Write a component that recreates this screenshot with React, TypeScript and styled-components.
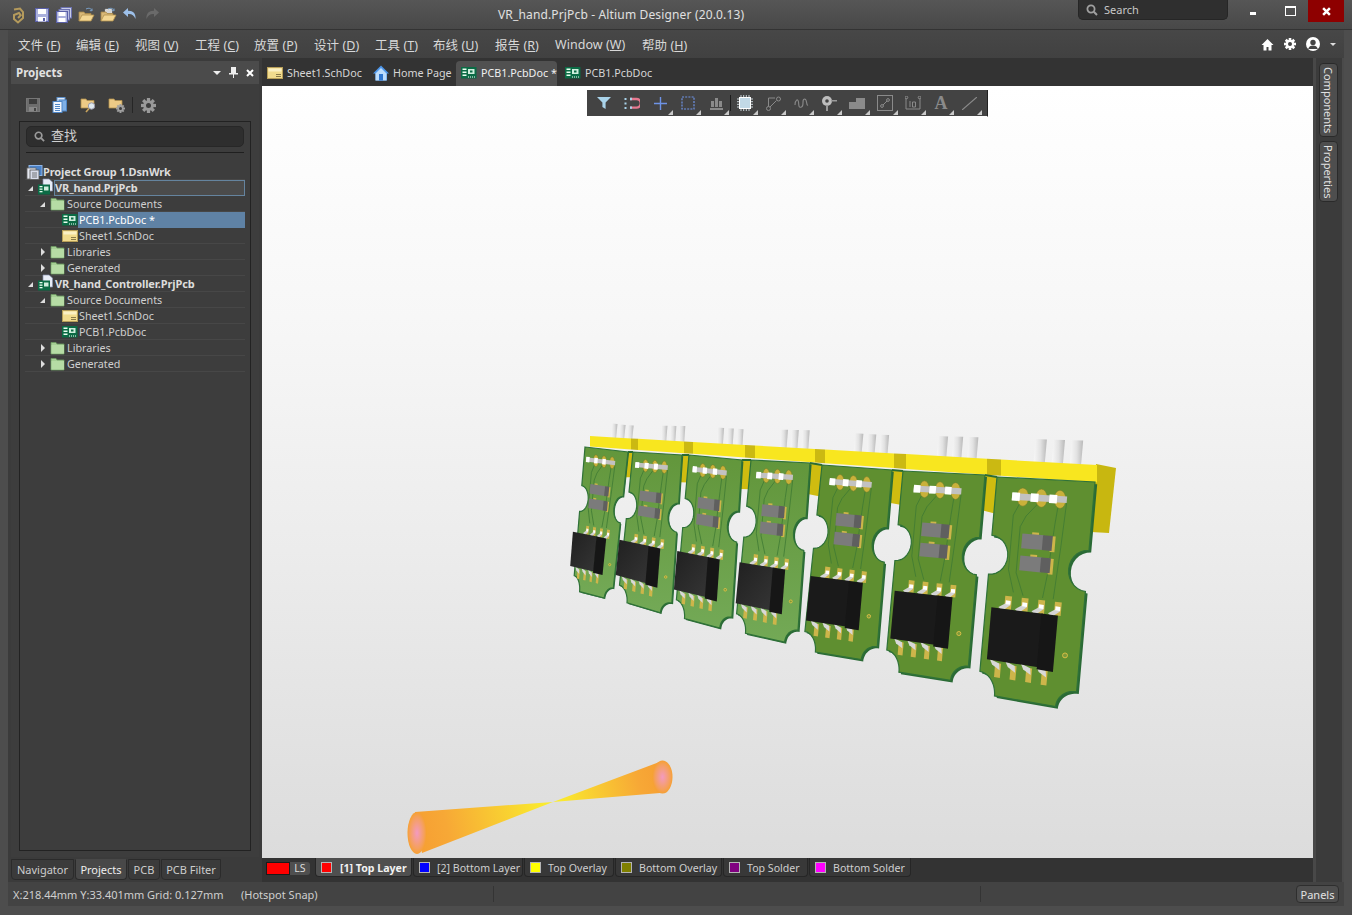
import React from 'react';
import styled, { createGlobalStyle } from 'styled-components';

const UI = `"Noto Sans", "Noto Sans CJK SC", sans-serif`;

const Global = createGlobalStyle`
  html, body { margin: 0; padding: 0; background: #4c4c4c; }
  * { box-sizing: border-box; }
`;

const Root = styled.div`
  width: 1352px; height: 915px; overflow: hidden; display: flex; flex-direction: column;
  background: #4d4d4d; font: 11px ${UI}; color: #d8d8d8; letter-spacing: 0;
`;
const TitleBar = styled.div`
  height: 30px; flex: none; display: flex; align-items: flex-start; padding-right: 8px;
  background: linear-gradient(#565656, #484848);
  border-bottom: 1px solid #333;
`;
const QuickBar = styled.div`
  width: 488px; flex: none; height: 29px; padding-left: 12px; display: flex; align-items: center; gap: 6px;
`;
const QuickIcon = styled.span`
  width: 16px; height: 16px; display: block; flex: none;
  svg { display: block; }
`;
const Title = styled.div`
  margin-left: 10px; line-height: 29px; font-size: 12px; color: #e0e0e0; letter-spacing: .15px;
`;
const SearchBox = styled.div`
  margin-left: auto; width: 150px; height: 20px; display: flex; align-items: center; gap: 6px; padding-left: 7px;
  background: #2f2f2f; border: 1px solid #262626; border-top: 0; border-radius: 0 0 5px 5px; color: #c8c8c8;
`;
const WinBtn = styled.div<{ $w: number; $close?: boolean; $low?: boolean }>`
  width: ${p => p.$w}px; height: 22px; display: flex; align-items: center; justify-content: center; flex: none;
  padding: ${p => (p.$low ? '5px 0 0 6px' : '0')};
  background: ${p => (p.$close ? '#8e0000' : 'transparent')};
`;
const MenuBar = styled.div`
  height: 28px; flex: none; margin: 0 8px; padding: 0 0 0 10px; display: flex; align-items: center;
  background: linear-gradient(#474747, #414141);
`;
const MenuItem = styled.div<{ $w: number }>`
  width: ${p => p.$w}px; flex: none; font-size: 12.5px; color: #d8d8d8; letter-spacing: .05px; white-space: nowrap;
`;
const MenuIcons = styled.div`
  margin-left: auto; display: flex; align-items: center; gap: 10px; padding-right: 8px;
`;
const Work = styled.div`
  flex: none; height: 824px; margin: 0 8px; display: flex; background: #3b3b3b;
`;
const LeftPanel = styled.div`
  width: 254px; flex: none; padding: 3px 3px 2px 3px; display: flex; flex-direction: column;
`;
const PanelHead = styled.div`
  height: 23px; flex: none; background: #4b4b4b; display: flex; align-items: center; padding: 0 5px;
  font-weight: 700; font-size: 11.5px; color: #e2e2e2; letter-spacing: 0;
`;
const PanelHeadIcons = styled.div`
  margin-left: auto; display: flex; align-items: center; gap: 8px;
`;
const PanelBody = styled.div`
  flex: 1; min-height: 0; background: #3d3d3d; padding: 0 8px 6px; display: flex; flex-direction: column;
`;
const PanelTools = styled.div`
  height: 37px; flex: none; display: flex; align-items: center; padding: 5px 0 0 6px;
`;
const ToolSlot = styled.span<{ $w: number }>`
  width: ${p => p.$w}px; flex: none; display: flex; justify-content: flex-start;
`;
const ToolSep = styled.span`
  width: 1px; height: 16px; background: #262626; margin: 0 8px 0 0; flex: none;
`;
const TreeBox = styled.div`
  flex: 1; min-height: 0; border: 1px solid #222; padding: 4px 5px 0 5px;
`;
const TreeSearch = styled.div`
  height: 21px; margin: 0 1px; background: #2e2e2e; border: 1px solid #272727; border-radius: 5px; display: flex; align-items: center;
  gap: 6px; padding: 0 0 4px 7px; font-size: 13px; color: #d0d0d0;
  svg { margin-top: 4px; }
`;
const TreeRule = styled.div`
  height: 1px; background: #1f1f1f; margin: 5px 1px 11px;
`;
const Row = styled.div<{ $indent: number }>`
  height: 16px; display: flex; align-items: center; border-bottom: 1px solid #474747; padding-left: ${p => p.$indent}px;
  white-space: nowrap; color: #cfcfcf; position: relative;
`;
const Arrow = styled.span<{ $open?: boolean }>`
  width: 9px; height: 8px; flex: none; display: block; margin-right: 2px; position: relative;
  &::before {
    content: ''; position: absolute; display: block;
    ${p =>
      p.$open
        ? 'left:1px; top:2px; border-style: solid; border-width: 0 0 5px 5px; border-color: transparent transparent #ddd transparent;'
        : 'left:2px; top:0; border-style: solid; border-width: 4px 0 4px 4px; border-color: transparent transparent transparent #ddd;'}
  }
`;
const RowIcon = styled.span`
  width: 16px; height: 14px; flex: none; display: block; svg { display: block; }
`;
const RowLabel = styled.span<{ $bold?: boolean; $sel?: 'focus' | 'active' }>`
  flex: ${p => (p.$sel ? 1 : '0 0 auto')}; height: 16px; padding-left: ${p => (p.$sel === 'focus' ? 0 : 1)}px;
  font-size: ${p => (p.$bold ? '11px' : '10.75px')};
  font-weight: ${p => (p.$bold ? 700 : 400)}; letter-spacing: ${p => (p.$bold ? '-.12px' : '0')};
  color: ${p => (p.$bold ? '#dcdcdc' : p.$sel ? '#fff' : '#cfcfcf')};
  background: ${p => (p.$sel === 'active' ? '#5f82a5' : p.$sel === 'focus' ? '#4b4b4b' : 'transparent')};
  border: ${p => (p.$sel === 'focus' ? '1px solid #65849f' : '0')};
  line-height: ${p => (p.$sel === 'focus' ? '13px' : p.$bold ? '15px' : '17px')};
`;
const PanelTabs = styled.div`
  height: 21px; margin-top: 2px; flex: none; display: flex; gap: 1px; align-items: stretch;
`;
const PanelTab = styled.div<{ $active?: boolean; $w: number }>`
  width: ${p => p.$w}px; text-align: center; line-height: 19px; color: ${p => (p.$active ? '#eee' : '#cdcdcd')};
  background: ${p => (p.$active ? '#484848' : '#3b3b3b')};
  border: 1px solid #2b2b2b; border-top-color: ${p => (p.$active ? '#484848' : '#2b2b2b')}; border-radius: 0 0 4px 4px;
  white-space: nowrap;
`;
const Center = styled.div`
  width: 1051px; flex: none; display: flex; flex-direction: column;
`;
const DocTabs = styled.div`
  height: 28px; flex: none; padding-top: 3px; background: #333; display: flex; align-items: stretch;
`;
const DocTab = styled.div<{ $active?: boolean; $w: number }>`
  width: ${p => p.$w}px; flex: none; display: flex; align-items: center; gap: 4px; padding: 0 0 2px 5px; white-space: nowrap;
  color: ${p => (p.$active ? '#f0f0f0' : '#d6d6d6')}; background: ${p => (p.$active ? '#515151' : 'transparent')};
  margin-right: ${p => (p.$active ? 3 : 0)}px; font-size: 10.75px;
  border-radius: 4px 4px 0 0;
  svg { flex: none; }
`;
const Canvas = styled.div`
  height: 772px; flex: none; position: relative; overflow: hidden;
  background: linear-gradient(#ffffff 0%, #f7f7f7 30%, #ececec 60%, #dcdcdc 100%);
`;
const Scene = styled.svg`
  position: absolute; inset: 0; width: 100%; height: 100%;
`;
const FloatBar = styled.div`
  position: absolute; left: 325px; top: 4px; height: 27px; width: 401px; background: #434343; display: flex; padding-left: 3px;
  border-right: 1px solid #222; border-bottom: 1px solid #fff; align-items: stretch;
`;
const FloatBtn = styled.div<{ $noCorner?: boolean }>`
  width: 28px; flex: none; display: flex; align-items: center; justify-content: center; position: relative;
  &::after {
    content: ''; position: absolute; right: 1px; bottom: 1px; border-style: solid; border-width: 0 0 5px 5px;
    border-color: transparent transparent ${p => (p.$noCorner ? 'transparent' : '#c9c9c9')} transparent;
  }
`;
const FloatSep = styled.div`
  width: 1px; margin: 5px 0; background: #1c1c1c; flex: none;
`;
const LayerBar = styled.div`
  height: 24px; flex: none; background: #333; display: flex; align-items: flex-start; padding-left: 4px;
`;
const LayerSwatch = styled.div`
  width: 24px; height: 13px; margin-top: 4px; background: #ff0000; border: 1px solid #1b1b1b; flex: none;
`;
const LsBtn = styled.div`
  width: 20px; height: 13px; margin: 4px 5px 0 0; background: #4f4f4f; text-align: center; line-height: 12px; font-size: 10.5px;
  border-radius: 0 3px 3px 0; color: #dcdcdc; flex: none;
`;
const LayerTab = styled.div<{ $active?: boolean; $w: number }>`
  width: ${p => p.$w}px; flex: none; height: 19px; margin-right: 1px; display: flex; align-items: center;
  gap: ${p => (p.$active ? 8 : 7)}px; padding: 0 0 0 5px; font-size: 10.6px; line-height: 20px;
  background: ${p => (p.$active ? '#4f4f4f' : '#383838')}; border: 1px solid #262626; border-top: 0; border-radius: 0 0 4px 4px;
  color: ${p => (p.$active ? '#f2f2f2' : '#cfcfcf')}; font-weight: ${p => (p.$active ? 700 : 400)}; white-space: nowrap;
`;
const LayerName = styled.span`
  position: relative; top: 1px;
`;
const LayerChip = styled.span<{ $c: string }>`
  width: 11px; height: 11px; flex: none; background: ${p => p.$c}; border: 1px solid #b4b4b4;
`;
const RightStrip = styled.div`
  width: 31px; flex: none; padding: 5px 4px 0 3px; display: flex; flex-direction: column; gap: 4px; background: #3b3b3b;
  border-left: 3px solid #484848; border-right: 2px solid #4a4a4a;
`;
const SideTab = styled.div<{ $h: number }>`
  height: ${p => p.$h}px; width: 19px; writing-mode: vertical-rl; text-align: center; line-height: 17px; background: #4e4e4e;
  border: 1px solid #2a2a2a; border-radius: 4px; color: #e2e2e2; white-space: nowrap;
`;
const StatusBar = styled.div`
  height: 24px; flex: none; margin: 0 8px; background: #434343; display: flex; align-items: center; position: relative;
  padding-left: 5px; color: #cfcfcf; white-space: nowrap;
`;
const StatusCell = styled.div<{ $w: number }>`
  width: ${p => p.$w}px; flex: none;
`;
const StatusRule = styled.div`
  width: 1px; height: 16px; background: #343434; flex: none;
`;
const PanelsBtn = styled.div`
  margin: 0 5px 0 auto; width: 43px; height: 18px; line-height: 17px; text-align: center; background: #4e4e4e;
  border: 1px solid #2e2e2e; border-radius: 4px; color: #e2e2e2;
`;

/* ---------- small drawn icons ---------- */
const Floppy = ({ c = '#aab0dc', dim }: { c?: string; dim?: boolean }) => (
  <svg width="16" height="16" viewBox="0 0 16 16">
    <rect x="1.5" y="1.5" width="13" height="13" fill={dim ? '#6d6d6d' : c} stroke={dim ? '#777' : '#5a60a8'} />
    <rect x="4" y="2" width="8" height="5" fill={dim ? '#3d3d3d' : '#fff'} />
    <rect x="4" y="10" width="8" height="4.5" fill={dim ? '#888' : '#fff'} />
    <rect x="9" y="11" width="2" height="3" fill={dim ? '#444' : '#5a60a8'} />
  </svg>
);
const Floppies = () => (
  <svg width="16" height="16" viewBox="0 0 16 16">
    <rect x="5" y="0.5" width="10.5" height="10.5" fill="#c8cce8" stroke="#6c72b0" />
    <rect x="3" y="2.5" width="10.5" height="10.5" fill="#b8bce0" stroke="#6c72b0" />
    <rect x="0.5" y="4.5" width="11" height="11" fill="#aab0dc" stroke="#5a60a8" />
    <rect x="2.5" y="5" width="7" height="4" fill="#fff" />
    <rect x="2.5" y="11" width="7" height="4" fill="#fff" />
  </svg>
);
const FolderOpen = ({ paper }: { paper?: boolean }) => (
  <svg width="17" height="16" viewBox="0 0 17 16">
    {paper && <path d="M5 2h7v6H5z" fill="#fff" stroke="#888" strokeWidth=".6" />}
    {paper && <path d="M6 4h5M6 6h5" stroke="#888" strokeWidth=".7" />}
    <path d="M1 14V5h5l1 1.5h6V9" fill="#d9b877" stroke="#a68746" strokeWidth=".8" />
    <path d="M1 14l3-6h12l-3 6z" fill="#f3d692" stroke="#b08f4d" strokeWidth=".8" />
    <path d="M8 2c3-1.5 5-.5 6 1.5M14 1.5v2.2h-2.2" fill="none" stroke="#7aa0c8" strokeWidth="1" />
  </svg>
);
const Undo = ({ on }: { on?: boolean }) => (
  <svg width="16" height="14" viewBox="0 0 16 14">
    <path d="M6 1L1 5.5 6 10V7c3.5-.4 6 1 7.5 5C14 6.5 11 3.6 6 3.8z" fill={on ? '#9dc0ea' : '#6a6a6a'} />
  </svg>
);
const Redo = () => (
  <svg width="16" height="14" viewBox="0 0 16 14">
    <path d="M10 1l5 4.5-5 4.5V7C6.5 6.6 4 8 2.5 12 2 6.5 5 3.6 10 3.8z" fill="#6a6a6a" />
  </svg>
);
const Logo = () => (
  <svg width="12" height="17" viewBox="0 0 12 17">
    <path d="M2 2.5L8 1.5l3 3.5v6l-5 4.5-4-3.5V8l5-2 1.7 2.2L6 11" fill="none" stroke="#b49a5c" strokeWidth="2" />
  </svg>
);
const Loupe = ({ c = '#a0a0a0', s = 12 }: { c?: string; s?: number }) => (
  <svg width={s} height={s} viewBox="0 0 12 12" style={{ flex: 'none' }}>
    <circle cx="5" cy="5" r="3.6" fill="none" stroke={c} strokeWidth="1.8" />
    <path d="M7.8 7.8L11 11" stroke={c} strokeWidth="2" />
  </svg>
);
const Gear = ({ c = '#fff', s = 12, inner = '#444' }: { c?: string; s?: number; inner?: string }) => (
  <svg width={s} height={s} viewBox="0 0 12 12">
    <g fill={c}>
      <circle cx="6" cy="6" r="4.2" />
      {[0, 45, 90, 135].map(a => (
        <rect key={a} x="4.7" y="0" width="2.6" height="12" transform={`rotate(${a} 6 6)`} />
      ))}
    </g>
    <circle cx="6" cy="6" r="2" fill={inner} />
  </svg>
);
const Pcb = () => (
  <svg width="16" height="14" viewBox="0 0 16 14">
    <rect x="0" y="1" width="15.5" height="11.5" fill="#0b6b45" />
    <rect x="1.5" y="2.5" width="4" height="1.5" fill="#e8fff0" />
    <rect x="1.5" y="5.5" width="4" height="1.5" fill="#e8fff0" />
    <rect x="1.5" y="8.5" width="4" height="1.5" fill="#e8fff0" />
    <rect x="7" y="3" width="6.5" height="5" fill="#cfeedd" />
    <rect x="9" y="4.5" width="2.5" height="2" fill="#0b6b45" />
    <path d="M7 11h1M9 11h1M11 11h1M13 11h1" stroke="#fff" strokeWidth="1" />
  </svg>
);
const Sch = () => (
  <svg width="16" height="14" viewBox="0 0 16 14">
    <rect x="0.5" y="1.5" width="15" height="11" fill="#f1db8d" stroke="#b79e58" />
    <rect x="1.5" y="2.5" width="13" height="3" fill="#fbf0c4" />
    <path d="M9 8.5h5M9 10.5h5" stroke="#8a7a48" strokeWidth="1" />
  </svg>
);
const Folder = () => (
  <svg width="15" height="14" viewBox="0 0 15 14">
    <path d="M1 3V1.5h5L7 3h7v10H1z" fill="#a5cf94" stroke="#6d9a62" strokeWidth=".8" />
    <rect x="1.5" y="4" width="12.5" height="8.5" fill="#b6dca5" />
  </svg>
);
const Prj = () => (
  <svg width="16" height="14" viewBox="0 0 16 14" overflow="visible">
    <path d="M5 -2h6l3.5 3v9H5z" fill="#e8edf7" stroke="#8a94b0" strokeWidth=".7" />
    <rect x="0" y="3.5" width="12" height="10" fill="#0b6b45" />
    <rect x="1.5" y="5" width="3" height="1.3" fill="#e8fff0" />
    <rect x="1.5" y="7.5" width="3" height="1.3" fill="#e8fff0" />
    <rect x="1.5" y="10" width="3" height="1.3" fill="#e8fff0" />
    <rect x="6" y="5.5" width="4.5" height="4" fill="#cfeedd" />
  </svg>
);
const Group = () => (
  <svg width="17" height="15" viewBox="0 0 17 15">
    <rect x="3" y="0.5" width="13" height="10" fill="#4a82c9" stroke="#8fb5e6" />
    <rect x="1" y="3" width="9" height="11" fill="#e6e9f2" stroke="#666" strokeWidth=".8" />
    <rect x="4" y="5" width="9" height="9.5" fill="#d8dcea" stroke="#555" strokeWidth=".8" />
    <path d="M6 8h5M6 10h5M6 12h5" stroke="#555" strokeWidth=".8" />
  </svg>
);
const Home = ({ c = '#fff', s = 13 }: { c?: string; s?: number }) => (
  <svg width={s} height={s} viewBox="0 0 13 13">
    <path d="M6.5 1L0.5 7h2v5.5h3V9h2v3.5h3V7h2z" fill={c} />
  </svg>
);
const HomeBlue = () => (
  <svg width="16" height="16" viewBox="0 0 16 16">
    <path d="M8 0.5L0 8.5h2.5v7H14v-7h2z" fill="#4d96ea" />
    <path d="M2.5 8.5L8 3l5.5 5.5v7h-11z" fill="#bcdcfb" />
    <rect x="6" y="9" width="4" height="6.5" fill="#2f76cf" />
  </svg>
);
const User = () => (
  <svg width="14" height="14" viewBox="0 0 14 14">
    <circle cx="7" cy="7" r="7" fill="#fff" />
    <circle cx="7" cy="5.4" r="2.7" fill="#444" />
    <path d="M2.2 12c.6-2.6 2.5-3.6 4.8-3.6s4.2 1 4.8 3.6" fill="#444" />
  </svg>
);
const Caret = ({ c = '#ddd', w = 5 }: { c?: string; w?: number }) => (
  <svg width={w * 2} height={w} viewBox={`0 0 ${w * 2} ${w}`}>
    <path d={`M0 0h${w * 2}L${w} ${w}z`} fill={c} />
  </svg>
);
const Pin = () => (
  <svg width="9" height="11" viewBox="0 0 9 11">
    <path d="M2 0h5v6h2v1.5H5V11H4V7.5H0V6h2z" fill="#eee" />
  </svg>
);
const Cross = ({ s = 8, w = 2 }: { s?: number; w?: number }) => (
  <svg width={s} height={s} viewBox="0 0 8 8">
    <path d="M1 1l6 6M7 1L1 7" stroke="#fff" strokeWidth={w} />
  </svg>
);
const FolderFind = ({ gear }: { gear?: boolean }) => (
  <svg width="17" height="16" viewBox="0 0 17 16">
    <path d="M1 2h5l1 1.5h7V11H1z" fill="#eecb86" stroke="#b08f4d" strokeWidth=".8" />
    {gear ? (
      <g transform="translate(8 7)"><Gear c="#a0a0a0" s={9} inner="#3d3d3d" /></g>
    ) : (
      <>
        <circle cx="11.5" cy="9" r="3.2" fill="#dfe9ef" stroke="#99a" />
        <path d="M9 11.5L6 15" stroke="#c9a45c" strokeWidth="1.6" />
      </>
    )}
  </svg>
);
const Docs = () => (
  <svg width="15" height="16" viewBox="0 0 15 16">
    <rect x="5" y="0.5" width="8" height="10" fill="#dfeaf8" stroke="#5d8fc9" />
    <rect x="7" y="3" width="7.5" height="11" fill="#7fb0e6" stroke="#4f86c6" />
    <rect x="1" y="4.5" width="9" height="11" fill="#f1f6fd" stroke="#4f86c6" />
    <path d="M3 7.5h5M3 9.5h5M3 11.5h5M3 13.5h5" stroke="#4f86c6" />
  </svg>
);

/* ---------- toolbar icons ---------- */
const G = '#8a8a8a';
const tools: React.ReactNode[] = [
  <svg key="f" width="14" height="12" viewBox="0 0 14 12"><path d="M0 0h14L8.6 5.6V12l-3.2-2V5.6z" fill="#a9d3ea" /></svg>,
  <svg key="m" width="16" height="13" viewBox="0 0 16 13"><path d="M6 2h6.5a4.3 4.3 0 0 1 0 8.6H6" fill="none" stroke="#e6788f" strokeWidth="2.4" /><path d="M6 2h2M6 10.6h2" stroke="#a9d3ea" strokeWidth="2.4" /><path d="M1.5 1v2M1.5 5.5v2M1.5 10v2" stroke="#a9d3ea" strokeWidth="2" /></svg>,
  <svg key="p" width="13" height="13" viewBox="0 0 13 13"><path d="M6.5 0v13M0 6.5h13" stroke="#6e93e6" strokeWidth="1.4" /></svg>,
  <svg key="r" width="14" height="14" viewBox="0 0 14 14"><rect x="1" y="1" width="12" height="12" fill="none" stroke="#6e93e6" strokeWidth="1.2" strokeDasharray="2 1.2" /></svg>,
  <svg key="b" width="13" height="13" viewBox="0 0 13 13"><path d="M1 4h3v6H1zM5 1h3v9H5zM9 4h3v6H9zM0 11h13v2H0z" fill={G} /></svg>,
  <svg key="c" width="16" height="16" viewBox="0 0 16 16"><rect x="2.5" y="2.5" width="11" height="11" fill="#c2d9e6" stroke="#fff" /><path d="M4 0v16M6.7 0v16M9.3 0v16M12 0v16M0 4h16M0 6.7h16M0 9.3h16M0 12h16" stroke="#d8e4ea" strokeDasharray="2 12 2" strokeWidth=".9" /></svg>,
  <svg key="ro" width="15" height="15" viewBox="0 0 15 15"><circle cx="2.5" cy="12.5" r="2" fill="none" stroke={G} /><circle cx="12.5" cy="3" r="2" fill="none" stroke={G} /><path d="M2.5 10.5V2H9M4 11L10.5 4.5" fill="none" stroke={G} /></svg>,
  <svg key="w" width="15" height="12" viewBox="0 0 15 12"><path d="M1 8C1 3 4 1 4.5 5s0 6 3 5 0-8 3-8 1.5 7 3.5 6" fill="none" stroke={G} strokeWidth="1.1" /></svg>,
  <svg key="v" width="16" height="16" viewBox="0 0 16 16"><circle cx="6" cy="6" r="5" fill="#bdbdbd" /><circle cx="6" cy="6" r="1.8" fill="#434343" /><path d="M10 5h6v1.6h-6zM5 10h2v6H5z" fill="#9a9a9a" /></svg>,
  <svg key="po" width="16" height="11" viewBox="0 0 16 11"><path d="M0 4h7V0h9v11H0z" fill={G} /></svg>,
  <svg key="d" width="16" height="16" viewBox="0 0 16 16"><rect x=".5" y=".5" width="15" height="15" fill="none" stroke={G} /><circle cx="5" cy="11" r="1.4" fill="none" stroke={G} /><circle cx="11" cy="5" r="1.4" fill="none" stroke={G} /><path d="M6 10l4-4" stroke={G} /></svg>,
  <svg key="t" width="16" height="15" viewBox="0 0 16 15"><path d="M1 2v11h14V2" fill="none" stroke={G} /><circle cx="1.5" cy="1.5" r="1.3" fill="none" stroke={G} /><circle cx="14.5" cy="1.5" r="1.3" fill="none" stroke={G} /><path d="M5 5v6M7.5 6h3v5h-3z" fill="none" stroke={G} /></svg>,
  <span key="a" style={{ fontFamily: '"Liberation Serif", serif', fontSize: 18, fontWeight: 700, color: G, lineHeight: 1 }}>A</span>,
  <svg key="l" width="15" height="13" viewBox="0 0 15 13"><path d="M0 13L15 0" stroke={G} strokeWidth="1.2" /></svg>,
];

/* ---------- 3D board scene ---------- */
type P = [number, number];
type Quad = { tl: P; tr: P; br: P; bl: P };
const quads: Quad[] = [
  { tl: [585, 447], tr: [628, 452], br: [612, 600], bl: [573, 590] },
  { tl: [633, 452], tr: [682, 455], br: [671, 616], bl: [618, 600] },
  { tl: [689, 455], tr: [742, 460], br: [731, 631], bl: [675, 616] },
  { tl: [751, 460], tr: [810, 463], br: [797, 645], bl: [735, 631] },
  { tl: [822, 465], tr: [892, 470], br: [876, 662], bl: [803, 650] },
  { tl: [903, 471], tr: [985, 475], br: [967, 683], bl: [885, 670] },
  { tl: [997, 477], tr: [1095, 482], br: [1075, 710], bl: [978, 693] },
];
const mapper = (q: Quad) => (u: number, v: number): P => [
  (1 - v) * ((1 - u) * q.tl[0] + u * q.tr[0]) + v * ((1 - u) * q.bl[0] + u * q.br[0]),
  (1 - v) * ((1 - u) * q.tl[1] + u * q.tr[1]) + v * ((1 - u) * q.bl[1] + u * q.br[1]),
];
const arc = (cu: number, cv: number, ru: number, rv: number, a0: number, a1: number, n = 14): P[] =>
  Array.from({ length: n + 1 }, (_, i) => {
    const a = ((a0 + ((a1 - a0) * i) / n) * Math.PI) / 180;
    return [cu + ru * Math.cos(a), cv + rv * Math.sin(a)] as P;
  });
const outline: P[] = [
  [0, 0],
  [1, 0],
  ...arc(1, 0.39, 0.19, 0.09, -90, -270),
  ...arc(1, 1, 0.2, 0.08, -90, -180),
  ...arc(0, 1, 0.17, 0.1, 0, -90),
  ...arc(0, 0.36, 0.18, 0.09, 90, -90),
];
const pts = (f: (u: number, v: number) => P, l: P[]) =>
  l.map(([u, v]) => f(u, v).map(n => n.toFixed(1)).join(',')).join(' ');
const box = (u0: number, v0: number, u1: number, v1: number): P[] => [
  [u0, v0], [u1, v0], [u1, v1], [u0, v1],
];
const traces: P[][] = [
  [[0.27, 0.1], [0.2, 0.17], [0.2, 0.42], [0.27, 0.52]],
  [[0.46, 0.1], [0.33, 0.17], [0.28, 0.22], [0.28, 0.43], [0.37, 0.53]],
  [[0.65, 0.1], [0.63, 0.2], [0.6, 0.42], [0.57, 0.53]],
  [[0.73, 0.1], [0.71, 0.3], [0.68, 0.53]],
];
const Gold = '#cdb54a';

const Board = ({ q, i }: { q: Quad; i: number }) => {
  const f = mapper(q);
  const chipFace = i < 4 ? 'url(#chipLight)' : '#1a1a1a';
  const chipL = -0.12 + 0.03 * i;
  const chipR = 0.7 + 0.007 * i;
  const chipSide = chipR - (0.24 - 0.012 * i);
  const grayL = 0.2 + 0.018 * i;
  const grayR = 0.65 - 0.005 * i;
  const grayMid = grayR - 0.1;
  const barL = 0.05 + 0.02 * i;
  const legShift = -0.08 + 0.013 * i;
  const edge = 1 + 0.2 * i;
  return (
    <g>
      <polygon points={pts((u, v) => { const p = f(u, v); return [p[0] + edge, p[1] + edge]; }, outline)} fill="#2a6a35" />
      <polygon points={pts(f, outline)} fill={i < 4 ? 'url(#pcbLight)' : '#5f8f30'} stroke="#2f7238" strokeWidth="1.2" />
      {traces.map((t, n) => (
        <polyline key={n} points={pts(f, t)} fill="none" stroke="#3f7a33" strokeWidth=".8" />
      ))}
      {[0.28, 0.47, 0.66].map(u => {
        const c = f(u, 0.085);
        return <ellipse key={u} cx={c[0]} cy={c[1]} rx={((q.tr[0] - q.tl[0]) * 0.06).toFixed(1)} ry={((q.bl[1] - q.tl[1]) * 0.042).toFixed(1)} fill="#c9b13a" stroke="#6e7a2a" strokeWidth=".5" />;
      })}
      <polygon points={pts(f, box(barL, 0.07, 0.73, 0.1))} fill="#c2c2c2" />
      {[0, 0.19, 0.38].map(d => (
        <polygon key={d} points={pts(f, box(barL + d, 0.066, barL + d + 0.08, 0.104))} fill="#fff" />
      ))}
      {[0.25, 0.35].map(v => (
        <g key={v}>
          <polygon points={pts(f, box(grayL + 0.1, v - 0.009, grayL + 0.17, v + 0.005))} fill={Gold} />
          <polygon points={pts(f, box(grayR - 0.02, v + 0.002, grayR + 0.03, v + 0.072))} fill={Gold} />
          <polygon points={pts(f, box(grayL, v, grayMid + 0.01, v + 0.067))} fill="#7b7b7b" />
          <polygon points={pts(f, box(grayMid, v, grayR, v + 0.067))} fill="#5f5f5f" />
        </g>
      ))}
      {[0.15, 0.32, 0.49, 0.66].map(u => (
        <g key={u}>
          <polygon points={pts(f, box(u + 0.04, 0.54, u + 0.11, 0.6))} fill={Gold} />
          <polygon points={pts(f, [[u - 0.02, 0.595], [u + 0.08, 0.565], [u + 0.1, 0.58], [u + 0.02, 0.61]])} fill="#d4d4d4" />
          <polygon points={pts(f, box(u + 0.05, 0.56, u + 0.1, 0.578))} fill="#fff" />
        </g>
      ))}
      {[0.12, 0.28, 0.44, 0.6].map(u => (
        <g key={u}>
          <polygon points={pts(f, box(u + legShift + 0.03, 0.85, u + legShift + 0.09, 0.915))} fill={Gold} />
          <polygon points={pts(f, [[u + legShift - 0.03, 0.835], [u + legShift + 0.07, 0.85], [u + legShift + 0.08, 0.88], [u + legShift, 0.86]])} fill="#d8d8d8" />
        </g>
      ))}
      <polygon points={pts(f, box(chipL, 0.6, chipSide + 0.015, 0.84))} fill={chipFace} />
      <polygon points={pts(f, box(chipSide, 0.6, chipR, 0.85))} fill="#161616" />
      {(() => {
        const c = f(0.85, 0.77);
        return <circle cx={c[0]} cy={c[1]} r={(q.tr[0] - q.tl[0]) * 0.025} fill="#7d9a3a" stroke="#d8bd45" strokeWidth="1" />;
      })()}
    </g>
  );
};

const bandTop = (x: number) => 436 + (x - 590) * 0.0574;
const bandBot = (x: number) => 446.5 + (x - 590) * 0.071;
const bandQuad = (a: number, b: number) =>
  `${a},${bandTop(a).toFixed(1)} ${b},${bandTop(b).toFixed(1)} ${b},${bandBot(b).toFixed(1)} ${a},${bandBot(a).toFixed(1)}`;
const bright: P[] = [[590, 631], [638, 684], [693, 745], [755, 815], [825, 894], [906, 987], [1001, 1097]];
const darkBand: P[] = [[631, 638], [684, 693], [745, 755], [815, 825], [894, 906], [987, 1001]];

const SceneArt = () => (
  <Scene viewBox="262 86 1051 772">
    <defs>
      <linearGradient id="pin" x1="0" x2="1" y1="0" y2="0">
        <stop offset="0" stopColor="#fafafa" />
        <stop offset=".55" stopColor="#e2e2e2" />
        <stop offset="1" stopColor="#b9b9b9" />
      </linearGradient>
      <linearGradient id="pcbLight" x1="0" x2="0" y1="0" y2="1">
        <stop offset="0" stopColor="#62963b" />
        <stop offset="1" stopColor="#73a956" />
      </linearGradient>
      <linearGradient id="chipLight" x1="0" x2="1" y1="0" y2="1">
        <stop offset="0" stopColor="#202020" />
        <stop offset="1" stopColor="#353535" />
      </linearGradient>
      <linearGradient id="beamL" gradientUnits="userSpaceOnUse" x1="420" y1="833" x2="553" y2="802">
        <stop offset="0" stopColor="#f6a033" />
        <stop offset=".2" stopColor="#f7a836" />
        <stop offset="1" stopColor="#faf02e" />
      </linearGradient>
      <linearGradient id="beamR" gradientUnits="userSpaceOnUse" x1="660" y1="777" x2="553" y2="802">
        <stop offset="0" stopColor="#f6a033" />
        <stop offset=".2" stopColor="#f7a836" />
        <stop offset="1" stopColor="#faf02e" />
      </linearGradient>
      <radialGradient id="capEnd">
        <stop offset="0" stopColor="#f39ac0" />
        <stop offset=".75" stopColor="#f5a05c" />
        <stop offset="1" stopColor="#f6a033" />
      </radialGradient>
    </defs>
    {quads.map((q, i) => {
      const f = mapper(q);
      const u = 0.58 - 0.037 * i;
      return [0, 1, 2].map(n => (
        <polygon key={`${i}-${n}`} points={pts(f, box(u + n * 0.185, -0.18, u + n * 0.185 + 0.115, -0.03))} fill="url(#pin)" />
      ));
    })}
    {quads.slice(0, 6).map((q, i) => {
      const a = mapper(q);
      const b = mapper(quads[i + 1]);
      const s = [a(0.98, 0), b(0.02, 0), b(0.02, 0.17), a(1, 0.17)];
      return <polygon key={i} points={s.map(p => p.join(',')).join(' ')} fill="#cfbc10" />;
    })}
    <polygon points="1096,464 1116,468 1109,533 1091,532" fill="#c8b710" />
    {bright.map(([a, b]) => <polygon key={a} points={bandQuad(a, b)} fill="#f8e61f" />)}
    {darkBand.map(([a, b]) => <polygon key={a} points={bandQuad(a, b)} fill="#cbb912" />)}
    {quads.slice(0, 6).map((q, i) => (
      <line key={i} x1={q.tr[0]} y1={q.tr[1]} x2={quads[i + 1].tl[0]} y2={quads[i + 1].tl[1]} stroke="#2b6b33" strokeWidth="2" />
    ))}
    {quads.map((q, i) => <Board key={i} q={q} i={i} />)}
    <polygon points="415,812 553,802 422,853" fill="url(#beamL)" />
    <polygon points="662,761 553,802 660,793" fill="url(#beamR)" />
    <ellipse cx="417" cy="833" rx="9.5" ry="21" fill="url(#capEnd)" />
    <ellipse cx="662.5" cy="777" rx="10" ry="16.5" fill="url(#capEnd)" />
  </Scene>
);

/* ---------- data ---------- */
const menus: [string, string, number][] = [
  ['文件', 'F', 58], ['编辑', 'E', 59], ['视图', 'V', 60], ['工程', 'C', 59], ['放置', 'P', 60], ['设计', 'D', 61],
  ['工具', 'T', 58], ['布线', 'U', 62], ['报告', 'R', 60],
];
type TreeItem = { label: string; indent: number; arrow?: 'open' | 'closed'; icon: React.ReactNode; bold?: boolean; sel?: 'focus' | 'active' };
const tree: TreeItem[] = [
  { label: 'Project Group 1.DsnWrk', indent: 1, icon: <Group />, bold: true },
  { label: 'VR_hand.PrjPcb', indent: 2, arrow: 'open', icon: <Prj />, bold: true, sel: 'focus' },
  { label: 'Source Documents', indent: 14, arrow: 'open', icon: <Folder /> },
  { label: 'PCB1.PcbDoc *', indent: 37, icon: <Pcb />, sel: 'active' },
  { label: 'Sheet1.SchDoc', indent: 37, icon: <Sch /> },
  { label: 'Libraries', indent: 14, arrow: 'closed', icon: <Folder /> },
  { label: 'Generated', indent: 14, arrow: 'closed', icon: <Folder /> },
  { label: 'VR_hand_Controller.PrjPcb', indent: 2, arrow: 'open', icon: <Prj />, bold: true },
  { label: 'Source Documents', indent: 14, arrow: 'open', icon: <Folder /> },
  { label: 'Sheet1.SchDoc', indent: 37, icon: <Sch /> },
  { label: 'PCB1.PcbDoc', indent: 37, icon: <Pcb /> },
  { label: 'Libraries', indent: 14, arrow: 'closed', icon: <Folder /> },
  { label: 'Generated', indent: 14, arrow: 'closed', icon: <Folder /> },
];
const layers: [string, string, number, boolean?][] = [
  ['[1] Top Layer', '#ff0000', 97, true],
  ['[2] Bottom Layer', '#0000ff', 110],
  ['Top Overlay', '#ffff00', 90],
  ['Bottom Overlay', '#808000', 107],
  ['Top Solder', '#800080', 85],
  ['Bottom Solder', '#ff00ff', 102],
];

export default function App() {
  return (
    <Root>
      <Global />
      <TitleBar>
        <QuickBar>
          <QuickIcon><Logo /></QuickIcon>
          <QuickIcon><Floppy /></QuickIcon>
          <QuickIcon><Floppies /></QuickIcon>
          <QuickIcon><FolderOpen /></QuickIcon>
          <QuickIcon><FolderOpen paper /></QuickIcon>
          <QuickIcon><Undo on /></QuickIcon>
          <QuickIcon><Redo /></QuickIcon>
        </QuickBar>
        <Title>VR_hand.PrjPcb - Altium Designer (20.0.13)</Title>
        <SearchBox><Loupe />Search</SearchBox>
        <WinBtn $w={44} $low>
          <svg width="6" height="3"><rect width="6" height="3" fill="#fff" /></svg>
        </WinBtn>
        <WinBtn $w={36}>
          <svg width="11" height="10"><rect x=".5" y=".5" width="10" height="9" fill="none" stroke="#fff" /><rect width="11" height="2" fill="#fff" /></svg>
        </WinBtn>
        <WinBtn $w={36} $close><Cross s={9} w={2.2} /></WinBtn>
      </TitleBar>
      <MenuBar>
        {menus.map(([t, k, w]) => (
          <MenuItem key={t} $w={w}>{t} (<u>{k}</u>)</MenuItem>
        ))}
        <MenuItem $w={87}>Window (<u>W</u>)</MenuItem>
        <MenuItem $w={50}>帮助 (<u>H</u>)</MenuItem>
        <MenuIcons>
          <Home />
          <Gear />
          <User />
          <Caret w={3} />
        </MenuIcons>
      </MenuBar>
      <Work>
        <LeftPanel>
          <PanelHead>
            Projects
            <PanelHeadIcons>
              <Caret c="#eee" w={4} />
              <Pin />
              <Cross />
            </PanelHeadIcons>
          </PanelHead>
          <PanelBody>
            <PanelTools>
              <ToolSlot $w={27}><Floppy dim /></ToolSlot>
              <ToolSlot $w={28}><Docs /></ToolSlot>
              <ToolSlot $w={28}><FolderFind /></ToolSlot>
              <ToolSlot $w={24}><FolderFind gear /></ToolSlot>
              <ToolSep />
              <ToolSlot $w={20}><Gear c="#9a9a9a" s={15} inner="#3d3d3d" /></ToolSlot>
            </PanelTools>
            <TreeBox>
              <TreeSearch><Loupe c="#9a9a9a" s={11} />查找</TreeSearch>
              <TreeRule />
              {tree.map((r, n) => (
                <Row key={n} $indent={r.indent}>
                  {r.arrow && <Arrow $open={r.arrow === 'open'} />}
                  <RowIcon>{r.icon}</RowIcon>
                  <RowLabel $bold={r.bold} $sel={r.sel}>{r.label}</RowLabel>
                </Row>
              ))}
            </TreeBox>
          </PanelBody>
          <PanelTabs>
            <PanelTab $w={63}>Navigator</PanelTab>
            <PanelTab $w={52} $active>Projects</PanelTab>
            <PanelTab $w={32}>PCB</PanelTab>
            <PanelTab $w={60}>PCB Filter</PanelTab>
          </PanelTabs>
        </LeftPanel>
        <Center>
          <DocTabs>
            <DocTab $w={106}><Sch />Sheet1.SchDoc</DocTab>
            <DocTab $w={88}><HomeBlue />Home Page</DocTab>
            <DocTab $w={101} $active><Pcb />PCB1.PcbDoc *</DocTab>
            <DocTab $w={100}><Pcb />PCB1.PcbDoc</DocTab>
          </DocTabs>
          <Canvas>
            <SceneArt />
            <FloatBar>
              {tools.map((t, i) => (
                <React.Fragment key={i}>
                  {i === 5 && <FloatSep />}
                  <FloatBtn $noCorner={i < 2}>{t}</FloatBtn>
                </React.Fragment>
              ))}
            </FloatBar>
          </Canvas>
          <LayerBar>
            <LayerSwatch />
            <LsBtn>LS</LsBtn>
            {layers.map(([t, c, w, a]) => (
              <LayerTab key={t} $w={w} $active={a}><LayerChip $c={c} /><LayerName>{t}</LayerName></LayerTab>
            ))}
          </LayerBar>
        </Center>
        <RightStrip>
          <SideTab $h={74}>Components</SideTab>
          <SideTab $h={61}>Properties</SideTab>
        </RightStrip>
      </Work>
      <StatusBar>
        <StatusCell $w={134}>X:218.44mm Y:33.401mm</StatusCell>
        <StatusCell $w={94}>Grid: 0.127mm</StatusCell>
        <StatusCell $w={252}>(Hotspot Snap)</StatusCell>
        <StatusRule />
        <StatusCell $w={486} />
        <StatusRule />
        <PanelsBtn>Panels</PanelsBtn>
      </StatusBar>
    </Root>
  );
}
